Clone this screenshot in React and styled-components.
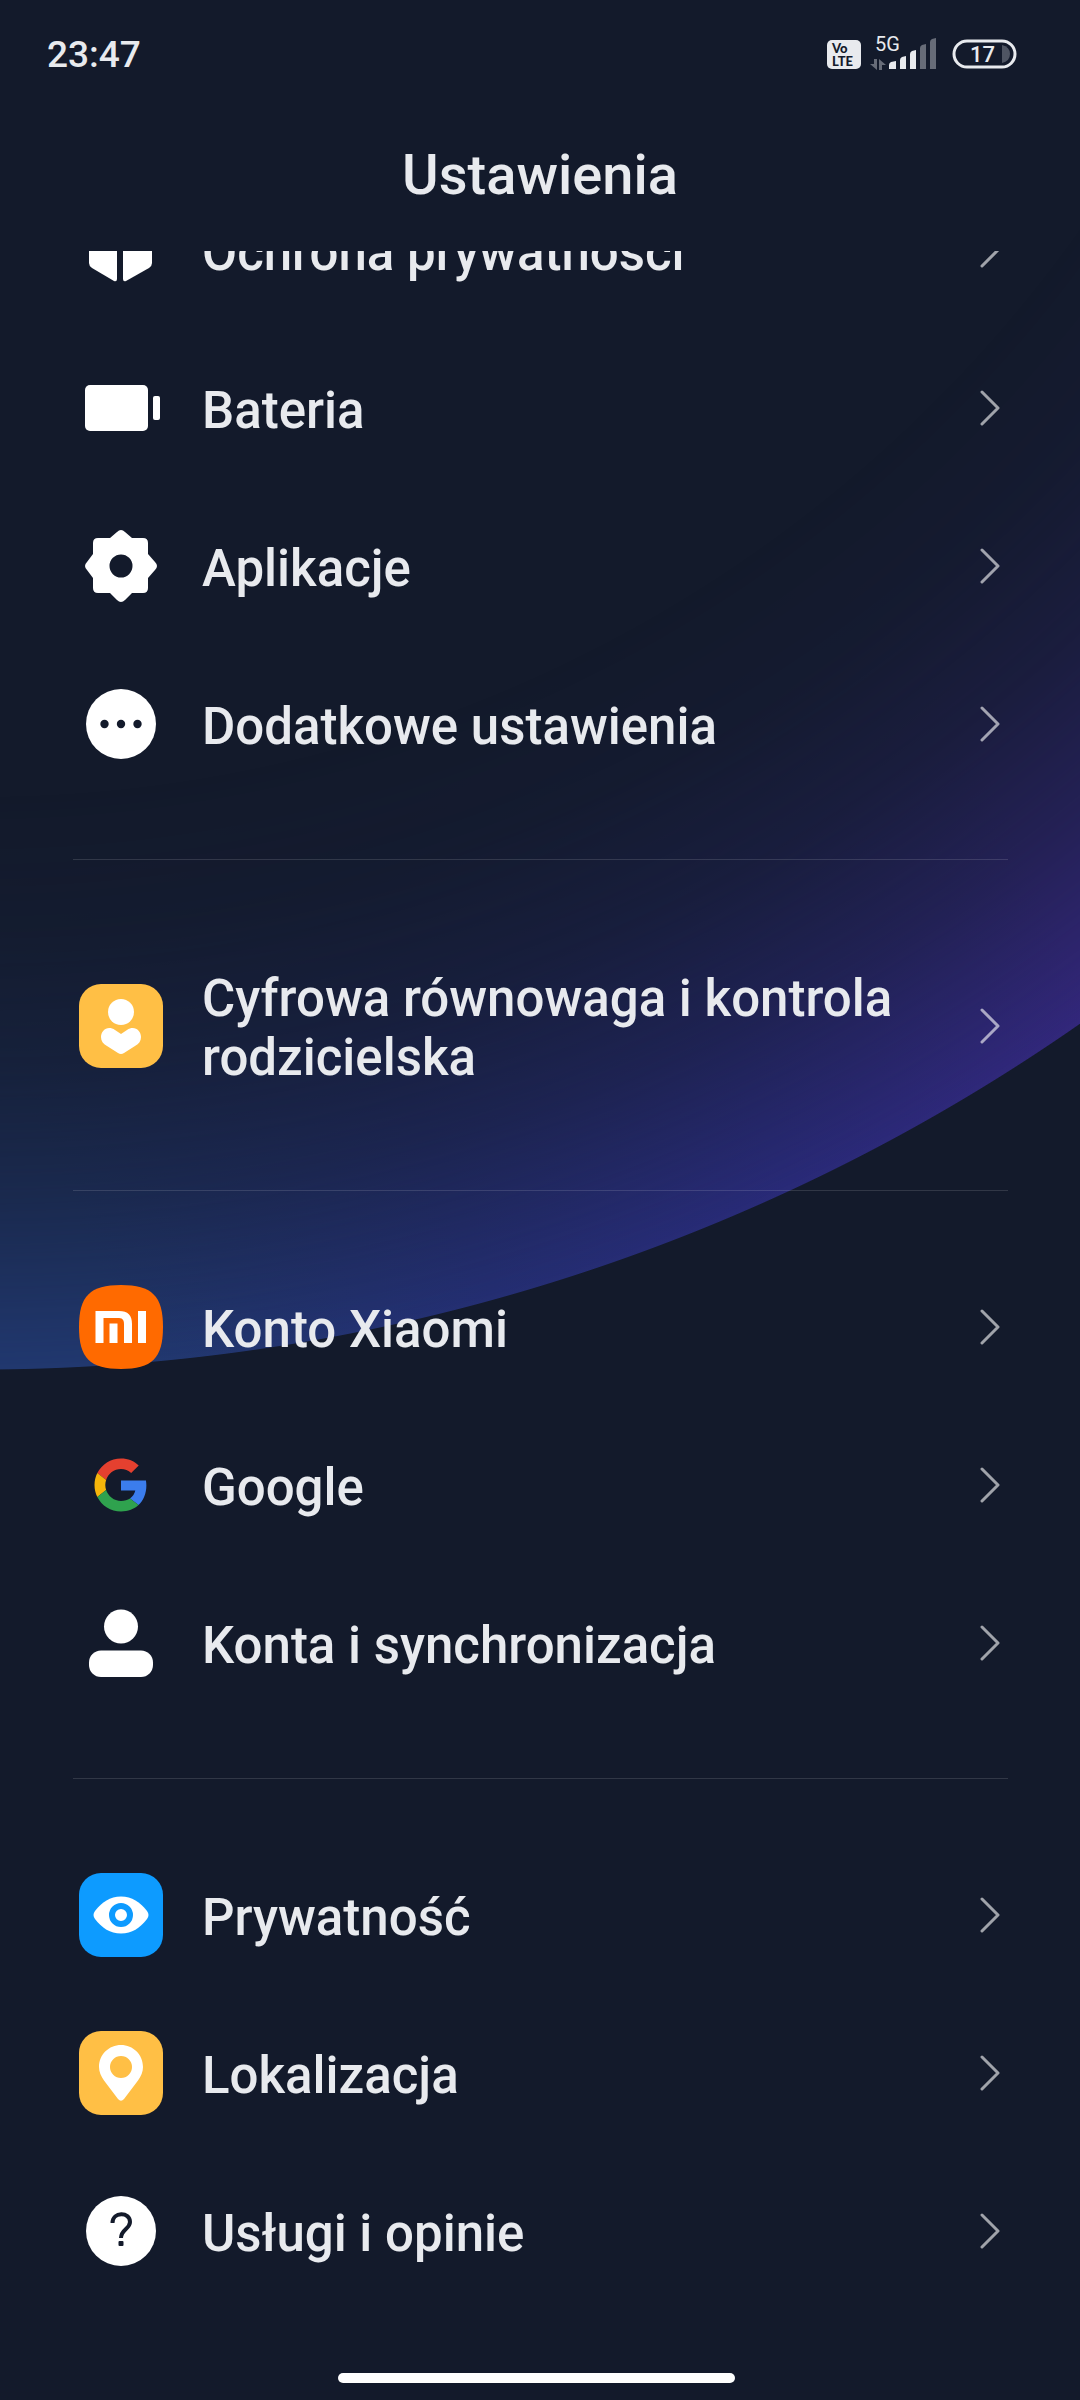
import React from "react";
import styled, { createGlobalStyle } from "styled-components";

const GlobalStyle = createGlobalStyle`
  *, *::before, *::after { box-sizing: border-box; }
  body {
    margin: 0;
    background: #131a2b;
    color: #e8eaee;
    font-family: Roboto, "Noto Sans", sans-serif;
  }
`;

const Page = styled.div`
  position: relative;
  display: flex;
  flex-direction: column;
  min-height: 100vh;
  overflow: hidden;
`;

/* Large glowing planet rim behind the list */
const Backdrop = styled.div`
  position: absolute;
  inset: 0;
  z-index: -1;
  background: linear-gradient(66deg, #21386f 28%, #242e72 46%, #292a78 62%, #33277b 80%);
  mask-image: radial-gradient(
    circle 1923px at -20px -553px,
    transparent 70%,
    rgba(0, 0, 0, 0.07) 77%,
    rgba(0, 0, 0, 0.24) 84%,
    rgba(0, 0, 0, 0.52) 91%,
    #000 99.95%,
    transparent 100%
  );
`;

const StatusBar = styled.header`
  display: flex;
  align-items: center;
  justify-content: space-between;
  height: 110px;
  padding: 0 63px 0 47px;
`;

const Clock = styled.time`
  font-size: 37px;
  font-weight: 500;
  line-height: 44px;
`;

const StatusIcons = styled.svg`
  display: block;
  width: 192px;
  height: 48px;
`;

const Title = styled.h1`
  margin: 0;
  height: 141px;
  padding-top: 32px;
  font-size: 56px;
  font-weight: 500;
  line-height: 66px;
  text-align: center;
`;

const Viewport = styled.main`
  flex: 1;
  overflow: hidden;
`;

/* The list is scrolled, so its first row is partly under the title */
const List = styled.div`
  margin-top: -80px;
`;

const Section = styled.ul`
  margin: 0 72px 0 73px;
  padding: 57px 0 56px;
  list-style: none;
  border-bottom: 1px solid rgba(255, 255, 255, 0.13);

  &:first-child { padding-top: 0; }
  &:last-child { border-bottom: 0; padding-bottom: 0; }
`;

const Row = styled.a`
  display: flex;
  align-items: center;
  padding: 0 8px 0 6px;
  color: inherit;
  text-decoration: none;
`;

const Icon = styled.svg`
  flex: none;
  width: 84px;
  height: 84px;
`;

const Label = styled.span`
  flex: 1;
  padding: 52px 70px 47px 39px;
  font-size: 51px;
  font-weight: 500;
  line-height: 59px;
`;

const Chevron = styled.svg`
  flex: none;
  width: 20px;
  height: 36px;
`;

const Footer = styled.footer`
  display: flex;
  justify-content: center;
  padding: 0 7px 17px 0;
`;

const HomeBar = styled.div`
  width: 37%;
  height: 10px;
  border-radius: 5px;
  background: #fff;
`;

const icons = {
  shield: (
    <g fill="#fff">
      <path d="M38 6L10 16V55q0 3 3 5L35 73q3 1 3-2Z" />
      <path d="M44 6L73 16V55q0 3-3 5L47 73q-3 1-3-2Z" />
    </g>
  ),
  battery: (
    <g fill="#fff">
      <rect x="6" y="19" width="63" height="46" rx="5" />
      <rect x="74" y="30" width="7" height="24" rx="2" />
    </g>
  ),
  gear: (
    <path
      fill="#fff"
      fillRule="evenodd"
      d="M38 8q4-4 8 0L53 14H64q5 0 5 5V30L76 38q4 4 0 8L69 54V64q0 5-5 5H53L46 76q-4 4-8 0L31 69H19q-5 0-5-5V54L8 46q-4-4 0-8L14 30V19q0-5 5-5H31ZM42 30.500a11.500 11.500 0 1 0 0 23a11.500 11.500 0 1 0 0-23Z"
    />
  ),
  dots: (
    <>
      <circle cx="42" cy="42" r="35" fill="#fff" />
      <g fill="#131a2b">
        <circle cx="25.500" cy="42" r="4.200" />
        <circle cx="42" cy="42" r="4.200" />
        <circle cx="58.500" cy="42" r="4.200" />
      </g>
    </>
  ),
  wellbeing: (
    <>
      <rect width="84" height="84" rx="22" fill="#ffbf45" />
      <circle cx="42" cy="28" r="13" fill="#fff" />
      <path
        fill="#fff"
        d="M42 50L36 46C29 41 22 46 22 53C22 57 24 60 28 62L39 69Q42 71 45 69L56 62C60 60 62 57 62 53C62 46 55 41 48 46Z"
      />
    </>
  ),
  xiaomi: (
    <>
      <path
        fill="#ff6a00"
        d="M42 0C73 0 84 11 84 42S73 84 42 84S0 73 0 42S11 0 42 0Z"
      />
      <g fill="#fff">
        <path d="M16.500 26H40C49 26 53 30 53 39V58H45V39C45 34 43 33 38.500 33H24.500V58H16.500Z" />
        <rect x="30.500" y="38.500" width="8" height="19.500" />
        <rect x="59" y="26" width="8" height="32" />
      </g>
    </>
  ),
  google: (
    <g transform="translate(15.500 15.500) scale(1.104)">
      <path fill="#e5402f" d="M24 9.500c3.540 0 6.710 1.220 9.210 3.600l6.850-6.850C35.900 2.380 30.470 0 24 0 14.620 0 6.510 5.380 2.560 13.220l7.980 6.190C12.430 13.720 17.740 9.500 24 9.500z" />
      <path fill="#3b7ded" d="M46.980 24.550c0-1.570-.15-3.090-.38-4.550H24v9.020h12.940c-.58 2.960-2.260 5.480-4.780 7.180l7.730 6c4.510-4.180 7.090-10.360 7.090-17.650z" />
      <path fill="#f5b50a" d="M10.530 28.590c-.48-1.450-.76-2.990-.76-4.590s.27-3.140.76-4.590l-7.980-6.190C.92 16.460 0 20.120 0 24c0 3.880.92 7.540 2.560 10.780l7.970-6.190z" />
      <path fill="#2fa24e" d="M24 48c6.480 0 11.930-2.130 15.890-5.810l-7.730-6c-2.150 1.450-4.920 2.300-8.160 2.300-6.260 0-11.570-4.220-13.470-9.910l-7.980 6.190C6.510 42.620 14.620 48 24 48z" />
    </g>
  ),
  account: (
    <g fill="#fff">
      <circle cx="42" cy="25.500" r="17" />
      <rect x="10" y="49.500" width="64" height="26.500" rx="12" />
    </g>
  ),
  eye: (
    <>
      <rect width="84" height="84" rx="22" fill="#0d9bff" />
      <path
        fill="#fff"
        d="M16 38C23 29 31 23.500 42 23.500S61 29 68 38Q71 42 68 46C61 55 53 60.500 42 60.500S23 55 16 46Q13 42 16 38Z"
      />
      <circle cx="42" cy="42" r="9" fill="#fff" stroke="#0d9bff" strokeWidth="6" />
    </>
  ),
  pin: (
    <>
      <rect width="84" height="84" rx="22" fill="#ffbf45" />
      <path
        fill="#fff"
        fillRule="evenodd"
        d="M42 14C54 14 64 23.500 64 36C64 41 62 45 59 49.500L45 68Q42 71.500 39 68L25 49.500C22 45 20 41 20 36C20 23.500 30 14 42 14ZM42 25a11 11 0 1 0 0 22a11 11 0 1 0 0-22Z"
      />
    </>
  ),
  help: (
    <>
      <circle cx="42" cy="42" r="35" fill="#fff" />
      <path
        d="M33.500 34C33.500 22.500 51 22.500 51 33C51 40 42 40 42 49"
        fill="none"
        stroke="#131a2b"
        strokeWidth="4"
      />
      <rect x="39.500" y="52" width="5" height="5" rx="1" fill="#131a2b" />
    </>
  ),
};

const sections = [
  [
    ["shield", "Ochrona prywatności"],
    ["battery", "Bateria"],
    ["gear", "Aplikacje"],
    ["dots", "Dodatkowe ustawienia"],
  ],
  [["wellbeing", "Cyfrowa równowaga i kontrola rodzicielska"]],
  [
    ["xiaomi", "Konto Xiaomi"],
    ["google", "Google"],
    ["account", "Konta i synchronizacja"],
  ],
  [
    ["eye", "Prywatność"],
    ["pin", "Lokalizacja"],
    ["help", "Usługi i opinie"],
  ],
];

function SettingsRow({ icon, label }) {
  return (
    <li>
      <Row href="#">
        <Icon viewBox="0 0 84 84" aria-hidden="true">{icons[icon]}</Icon>
        <Label>{label}</Label>
        <Chevron viewBox="0 0 20 36" aria-hidden="true">
          <path
            d="M2 2L18 18L2 34"
            fill="none"
            stroke="#fff"
            strokeOpacity="0.6"
            strokeWidth="3"
            strokeLinecap="round"
            strokeLinejoin="round"
          />
        </Chevron>
      </Row>
    </li>
  );
}

function StatusIndicators() {
  return (
    <StatusIcons viewBox="0 0 192 48" role="img" aria-label="VoLTE, 5G, 17%">
      <rect x="2" y="9" width="34" height="29" rx="5" fill="#e8eaee" />
      <g fontFamily="Lato, sans-serif" fontWeight="900" fill="#131a2b">
        <text x="7" y="22" fontSize="13">Vo</text>
        <text x="7" y="35" fontSize="13">LTE</text>
      </g>
      <text x="50" y="20" fontSize="20" fill="#e8eaee">5G</text>
      <g fill="#676c78">
        <path d="M49 28h3v11L45 33h4ZM54 39V28l7 6h-4v5Z" />
        <path d="M95 17q0-2 2-3l4-1V38H95Z" />
        <path d="M105 11q0-2 2-3l4-1V38H105Z" />
      </g>
      <g fill="#e8eaee">
        <path d="M64 34q0-2 2-3l5-1V38H64Z" />
        <path d="M75 29q0-2 2-3l4-1V38H75Z" />
        <path d="M85 23q0-2 2-3l4-1V38H85Z" />
      </g>
      <path d="M177 14q8 2 8 9t-8 9Z" fill="#4f5563" />
      <rect x="129" y="10" width="61" height="26" rx="13" fill="none" stroke="#e8eaee" strokeWidth="3" />
      <text x="145" y="31" fontSize="22" fontWeight="500" fill="#e8eaee">17</text>
    </StatusIcons>
  );
}

export default function App() {
  return (
    <>
      <GlobalStyle />
      <Page>
        <Backdrop />
        <StatusBar>
          <Clock>23:47</Clock>
          <StatusIndicators />
        </StatusBar>
        <Title>Ustawienia</Title>
        <Viewport>
          <List>
            {sections.map((rows) => (
              <Section key={rows[0][0]}>
                {rows.map(([icon, label]) => (
                  <SettingsRow key={icon} icon={icon} label={label} />
                ))}
              </Section>
            ))}
          </List>
        </Viewport>
        <Footer>
          <HomeBar />
        </Footer>
      </Page>
    </>
  );
}
